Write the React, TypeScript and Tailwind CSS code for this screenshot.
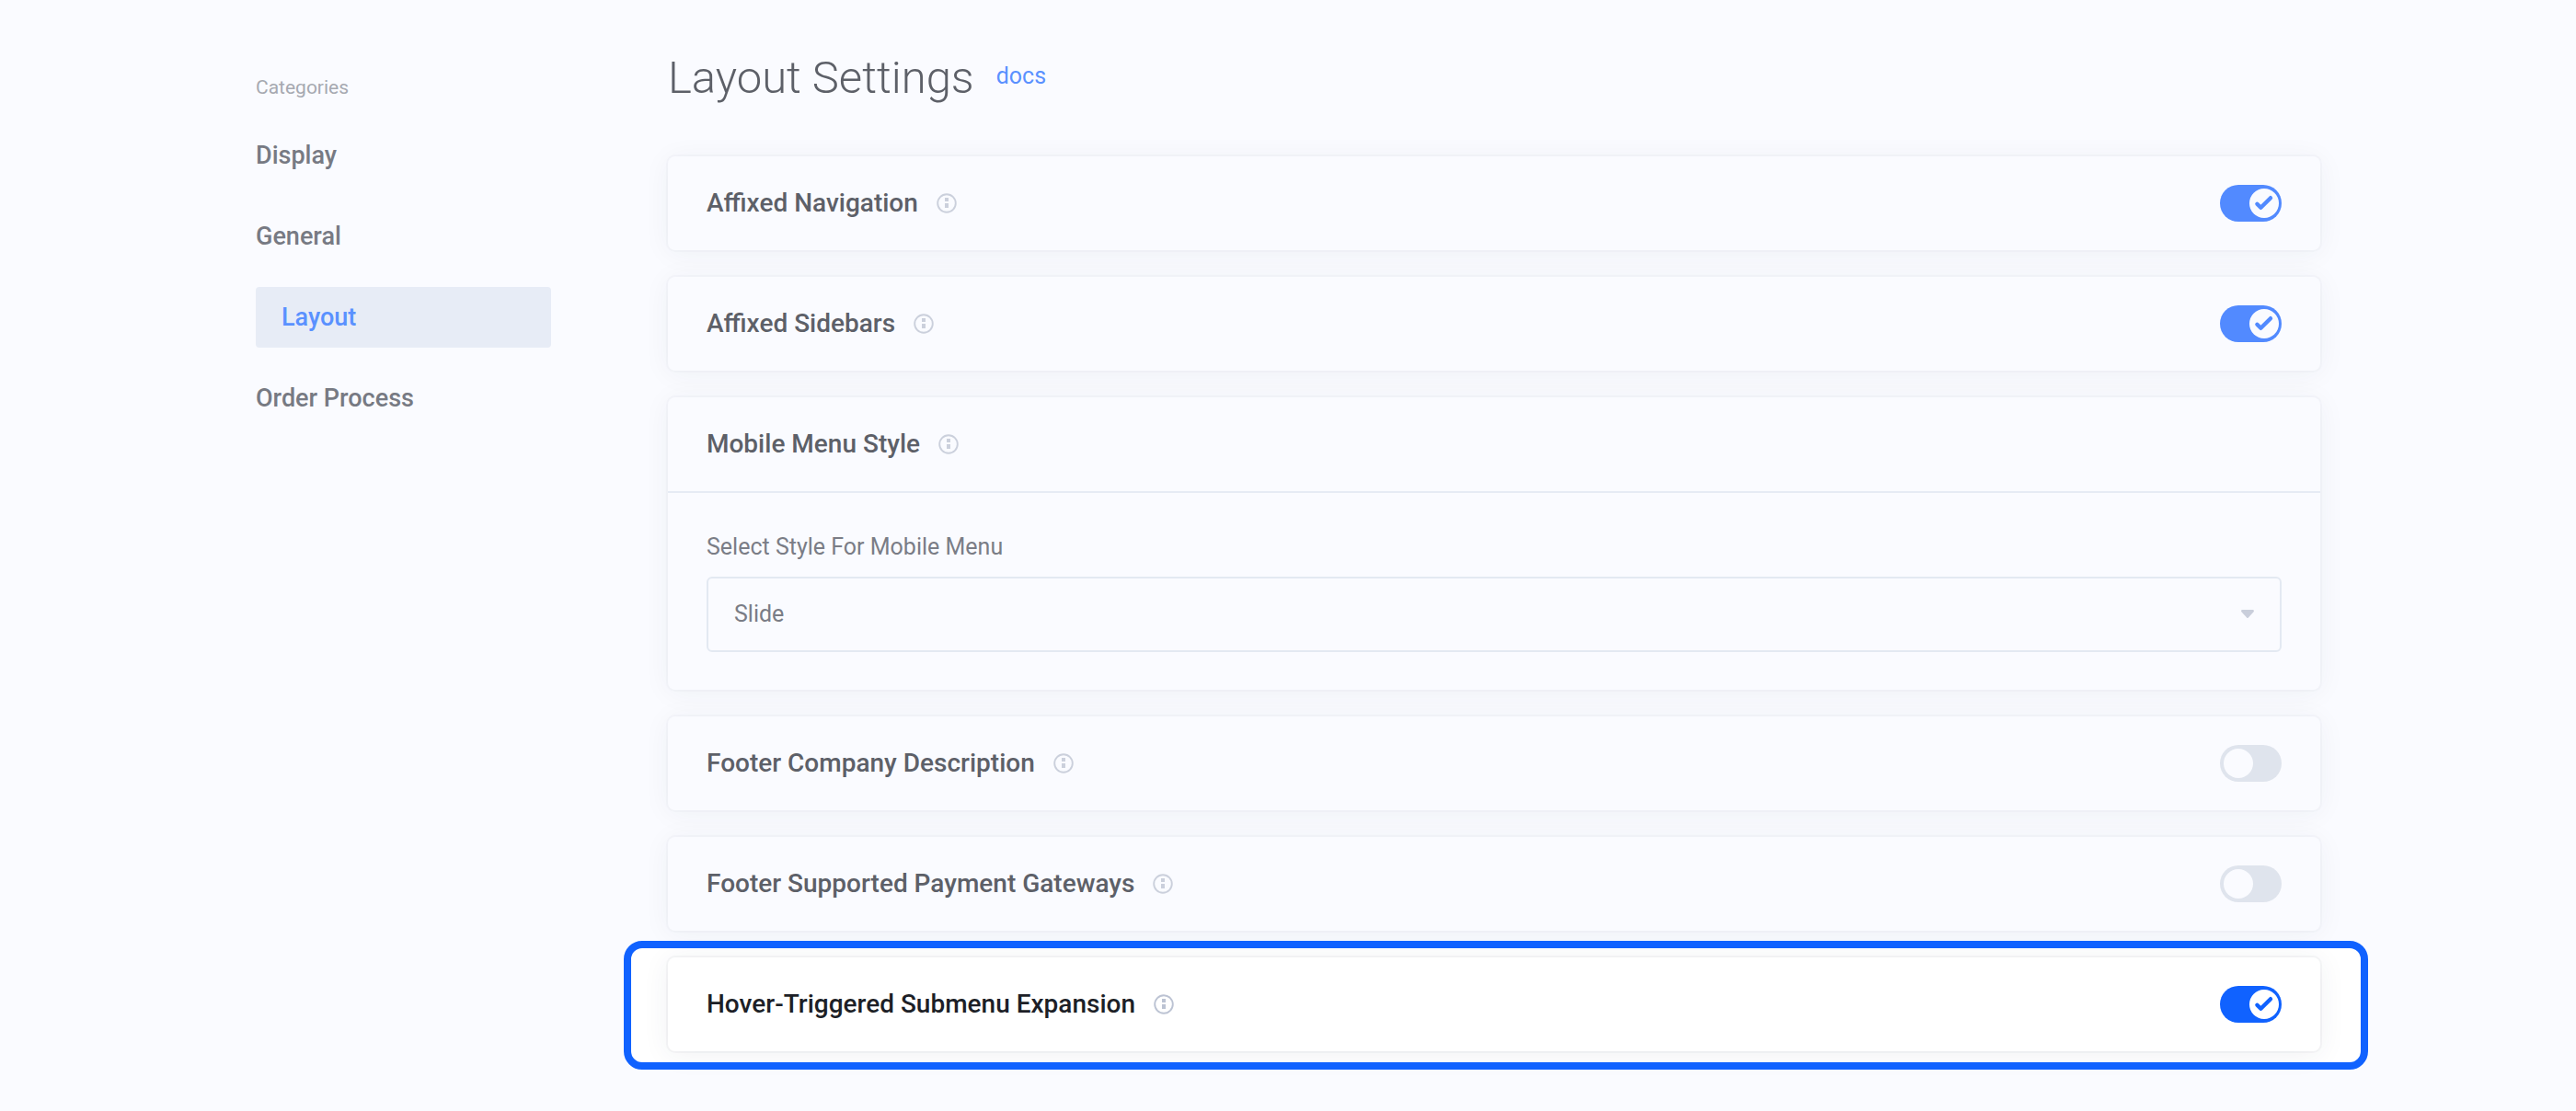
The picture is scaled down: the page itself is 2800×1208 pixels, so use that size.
import { useId } from "react";
import type { ReactNode } from "react";

const categories = ["Display", "General", "Layout", "Order Process"];

function InfoIcon() {
  return (
    <svg viewBox="0 0 22 22" className="size-[22px]" fill="none" aria-hidden="true">
      <circle cx="11" cy="11" r="9.8" stroke="currentColor" strokeWidth="1.9" />
      <path d="M9 5h4v4H9zM9 11h4v5H9z" fill="currentColor" />
    </svg>
  );
}

function Switch({ id, on, highlighted }: { id: string; on: boolean; highlighted: boolean }) {
  return (
    <span className="relative block h-10 w-[67px] shrink-0">
      <input
        id={id}
        type="checkbox"
        role="switch"
        defaultChecked={on}
        className={
          highlighted
            ? "peer block h-10 w-[67px] cursor-pointer appearance-none rounded-full bg-[#d9dfea] checked:bg-[#1062ff]"
            : "peer block h-10 w-[67px] cursor-pointer appearance-none rounded-full bg-[#dfe4ed] checked:bg-[#528aff]"
        }
      />
      <span
        className={
          highlighted
            ? "pointer-events-none absolute top-1 left-1 size-8 rounded-full bg-white text-transparent peer-checked:translate-x-7 peer-checked:text-[#1062ff]"
            : "pointer-events-none absolute top-1 left-1 size-8 rounded-full bg-[#fafbff] text-transparent peer-checked:translate-x-7 peer-checked:text-[#528aff]"
        }
      >
        <svg viewBox="0 0 32 32" className="size-8" fill="none" aria-hidden="true">
          <path d="M8.4 16.8l4 4L23 10.2" stroke="currentColor" strokeWidth="4.4" strokeLinecap="round" strokeLinejoin="round" />
        </svg>
      </span>
    </span>
  );
}

type CardProps = {
  title: string;
  on?: boolean;
  highlighted?: boolean;
  children?: ReactNode;
};

function SettingCard({ title, on, highlighted = false, children }: CardProps) {
  const id = useId();
  return (
    <section
      className={
        highlighted
          ? "relative rounded-lg bg-white shadow-[0_0_0_2px_rgba(40,50,80,0.04),0_3px_30px_rgba(40,50,80,0.07)]"
          : "relative rounded-lg bg-[#fafbff] shadow-[0_0_0_2px_rgba(40,50,80,0.025),0_3px_30px_rgba(40,50,80,0.055)]"
      }
    >
      <div className="flex items-center justify-between px-[42px] py-[31px]">
        <div className="flex items-center gap-5">
          <h2
            className={
              highlighted
                ? "text-[28px] leading-10 font-medium text-[#1d1f27]"
                : "text-[28px] leading-10 font-medium text-[#5d6068]"
            }
          >
            {on === undefined ? title : <label htmlFor={id}>{title}</label>}
          </h2>
          <button
            type="button"
            aria-label={"About " + title}
            className={highlighted ? "text-[#bcc3d3]" : "text-[#cbd0dc]"}
          >
            <InfoIcon />
          </button>
        </div>
        {on !== undefined && <Switch id={id} on={on} highlighted={highlighted} />}
      </div>
      {children}
    </section>
  );
}

function MobileMenuField() {
  return (
    <div className="border-t-2 border-[#e6ebf4] px-[42px] pt-11 pb-[41px] text-[25px] text-[#7a7d86]">
      <label htmlFor="mobile-menu-style" className="block leading-[30px]">
        Select Style For Mobile Menu
      </label>
      <div className="relative mt-[17px]">
        <select
          id="mobile-menu-style"
          defaultValue="Slide"
          className="block h-[82px] w-full appearance-none rounded-md border-2 border-[#e3e9f2] bg-[#fafbff] pr-16 pl-7"
        >
          <option>Slide</option>
          <option>Dropdown</option>
        </select>
        <svg
          viewBox="0 0 14 9"
          className="pointer-events-none absolute top-9 right-[30px] h-[9px] w-[14px] text-[#c9cedb]"
          aria-hidden="true"
        >
          <path d="M1.4 0h11.2c1.2 0 1.8 1.3 1 2.2L7.9 8.4a1.2 1.2 0 0 1-1.8 0L.4 2.2C-.4 1.3.2 0 1.4 0z" fill="currentColor" />
        </svg>
      </div>
    </div>
  );
}

export default function App() {
  return (
    <div className="min-h-screen bg-[#fafbff] px-8 pt-[55px] pb-16 font-['Roboto',sans-serif]">
      <div className="mx-auto flex max-w-[2244px] gap-[127px]">
        <nav className="w-[321px] shrink-0 pt-[25px]" aria-label="Categories">
          <p className="text-[21px] leading-[30px] text-[#a6a9b1]">Categories</p>
          <ul className="mt-[26px] flex flex-col gap-[22px] text-[27px] font-medium">
            {categories.map((name) => (
              <li key={name}>
                <a
                  href="#"
                  aria-current={name === "Layout" ? "page" : undefined}
                  className={
                    name === "Layout"
                      ? "block rounded-sm bg-[#e7ecf6] px-7 leading-[66px] text-[#5a91ff]"
                      : "block leading-[66px] text-[#777a83]"
                  }
                >
                  {name}
                </a>
              </li>
            ))}
          </ul>
        </nav>

        <main className="min-w-0 flex-1">
          <header className="flex items-center gap-6">
            <h1 className="text-[49px] leading-[60px] font-light text-[#5d6068]">Layout Settings</h1>
            <a href="#" className="pb-1 text-[25px] leading-[30px] text-[#5a91ff]">
              docs
            </a>
          </header>

          <div className="mt-[55px] flex flex-col gap-[29px]">
            <SettingCard title="Affixed Navigation" on />
            <SettingCard title="Affixed Sidebars" on />
            <SettingCard title="Mobile Menu Style">
              <MobileMenuField />
            </SettingCard>
            <SettingCard title="Footer Company Description" on={false} />
            <SettingCard title="Footer Supported Payment Gateways" on={false} />
            <div className="relative">
              <div className="absolute -top-[18px] -right-[52px] -bottom-5 -left-12 rounded-[20px] bg-white" />
              <SettingCard title="Hover-Triggered Submenu Expansion" on highlighted />
              <div className="pointer-events-none absolute -top-[18px] -right-[52px] -bottom-5 -left-12 rounded-[20px] border-8 border-[#1062ff]" />
            </div>
          </div>
        </main>
      </div>
    </div>
  );
}
